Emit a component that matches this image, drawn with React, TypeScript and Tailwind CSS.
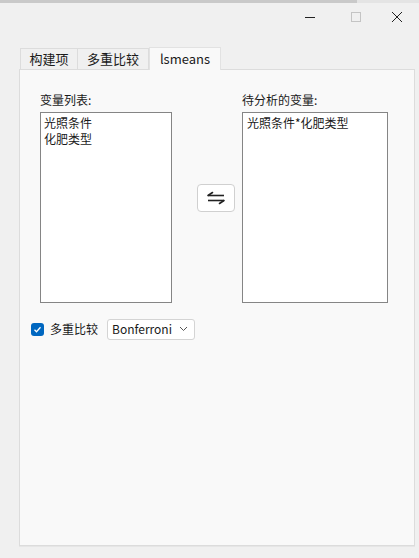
import React, { useState } from "react";

const font = { fontFamily: '"Noto Sans CJK SC", "Noto Sans", sans-serif' };

const App: React.FC = () => {
  const [left] = useState<string[]>(["光照条件", "化肥类型"]);
  const [right] = useState<string[]>(["光照条件*化肥类型"]);
  const [tab, setTab] = useState<number>(2);
  const tabs = ["构建项", "多重比较", "lsmeans"];

  return (
    <div className="w-[419px] h-[558px] bg-[#f0f0f0] flex flex-col text-[12px] text-[#1a1a1a] overflow-hidden" style={font}>
      {/* edge of the window behind */}
      <div className="flex h-[3px] shrink-0">
        <div className="w-[357px] bg-[#c9c9c9]" />
        <div className="flex-1 bg-[#e4e4e4]" />
      </div>

      {/* title bar */}
      <div className="h-[28px] flex justify-end items-center shrink-0">
        <button className="w-[46px] h-[28px] flex items-center justify-center">
          <svg width="12" height="12" viewBox="0 0 12 12"><path d="M1 6.5h10" stroke="#222" strokeWidth="1" /></svg>
        </button>
        <button className="w-[46px] h-[28px] flex items-center justify-center">
          <svg width="12" height="12" viewBox="0 0 12 12"><rect x="1.5" y="1.5" width="9" height="9" fill="none" stroke="#c4c4c4" strokeWidth="1" /></svg>
        </button>
        <button className="w-[40px] h-[28px] flex items-center justify-center pr-[4px]">
          <svg width="12" height="12" viewBox="0 0 12 12"><path d="M1 1l10 10M11 1L1 11" stroke="#222" strokeWidth="1" /></svg>
        </button>
      </div>

      {/* tabs */}
      <div className="flex items-end pl-[20px] h-[38px] shrink-0">
        {tabs.map((t, i) => (
          <button
            key={t}
            onClick={() => setTab(i)}
            className={
              i === tab
                ? "h-[23px] p-0 text-center whitespace-nowrap bg-[#f9f9f9] border border-b-0 border-[#e2e2e2] text-[13px] leading-[20px] -mb-px relative z-10 w-[72px]"
                : "h-[21px] p-0 text-center whitespace-nowrap bg-[#f0f0f0] border border-b-0 border-[#dcdcdc] text-[13px] leading-[20px] " + (i === 0 ? "w-[58px]" : "w-[71px] border-l-0")
            }
          >
            {t}
          </button>
        ))}
      </div>

      {/* tab panel */}
      <div className="ml-[19px] mr-[4px] h-[477px] bg-[#f9f9f9] border border-[#dcdcdc] shadow-[0_1px_0_#e6e6e6] flex flex-col pt-[20px] pl-[20px]">
        <div className="flex">
          <div className="flex flex-col w-[132px]">
            <div className="h-[22px] leading-[20px] text-[12px]">变量列表:</div>
            <div className="h-[191px] bg-white border border-[#858585] px-[3px] pt-[2px] leading-[16px]">
              {left.map((v) => (
                <div key={v}>{v}</div>
              ))}
            </div>
          </div>
          <div className="w-[70px] flex items-start justify-end pr-[7px] pt-[94px]">
            <button className="w-[38px] h-[28px] bg-white border border-[#d0d0d0] rounded-[4px] flex items-center justify-center">
              <svg width="20" height="14" viewBox="0 0 20 14">
                <path d="M2 4.5h16" stroke="#222" strokeWidth="1.6" />
                <path d="M2 4.5l4.5-3" stroke="#222" strokeWidth="1.6" strokeLinecap="round" />
                <path d="M2 9.5h16" stroke="#222" strokeWidth="1.6" />
                <path d="M18 9.5l-4.5 3" stroke="#222" strokeWidth="1.6" strokeLinecap="round" />
              </svg>
            </button>
          </div>
          <div className="flex flex-col w-[146px]">
            <div className="h-[22px] leading-[20px] text-[12px]">待分析的变量:</div>
            <div className="h-[191px] bg-white border border-[#858585] px-[4px] pt-[2px] leading-[16px]">
              {right.map((v) => (
                <div key={v}>{v}</div>
              ))}
            </div>
          </div>
        </div>

        <div className="flex items-center mt-[16px] -ml-[9px] h-[20px]">
          <div className="w-[13px] h-[13px] rounded-[3px] bg-[#0067c0] flex items-center justify-center">
            <svg width="9" height="9" viewBox="0 0 9 9"><path d="M1.5 4.8l2 2 4-4.5" fill="none" stroke="white" strokeWidth="1.3" /></svg>
          </div>
          <span className="ml-[6px] text-[12px]">多重比较</span>
          <div className="ml-[9px] w-[88px] h-[21px] bg-white border border-[#d4d4d4] rounded-[3px] flex items-center justify-between pl-[4px] pr-[6px]">
            <span className="text-[12px]">Bonferroni</span>
            <svg width="9" height="6" viewBox="0 0 9 6"><path d="M1 1l3.5 3.5L8 1" fill="none" stroke="#555" strokeWidth="1" /></svg>
          </div>
        </div>
      </div>
    </div>
  );
};

export default App;
